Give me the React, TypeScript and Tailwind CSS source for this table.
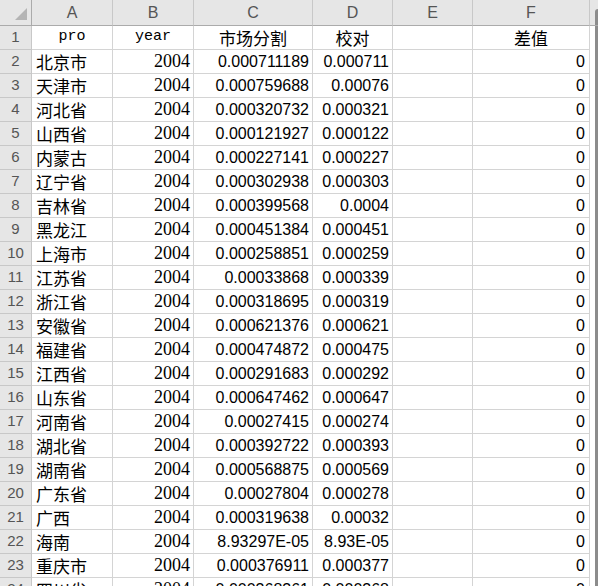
const rows: [string, string, string, string][] = [
  ["北京市", "0.000711189", "0.000711", "0"],
  ["天津市", "0.000759688", "0.00076", "0"],
  ["河北省", "0.000320732", "0.000321", "0"],
  ["山西省", "0.000121927", "0.000122", "0"],
  ["内蒙古", "0.000227141", "0.000227", "0"],
  ["辽宁省", "0.000302938", "0.000303", "0"],
  ["吉林省", "0.000399568", "0.0004", "0"],
  ["黑龙江", "0.000451384", "0.000451", "0"],
  ["上海市", "0.000258851", "0.000259", "0"],
  ["江苏省", "0.00033868", "0.000339", "0"],
  ["浙江省", "0.000318695", "0.000319", "0"],
  ["安徽省", "0.000621376", "0.000621", "0"],
  ["福建省", "0.000474872", "0.000475", "0"],
  ["江西省", "0.000291683", "0.000292", "0"],
  ["山东省", "0.000647462", "0.000647", "0"],
  ["河南省", "0.00027415", "0.000274", "0"],
  ["湖北省", "0.000392722", "0.000393", "0"],
  ["湖南省", "0.000568875", "0.000569", "0"],
  ["广东省", "0.00027804", "0.000278", "0"],
  ["广西", "0.000319638", "0.00032", "0"],
  ["海南", "8.93297E-05", "8.93E-05", "0"],
  ["重庆市", "0.000376911", "0.000377", "0"],
  ["四川省", "0.000368361", "0.000368", "0"],
];

const cols = "grid grid-cols-[32px_81px_81px_119px_80px_80px_117px]";
const cell = "h-[24px] border-r border-b border-[#d4d4d4] flex items-center overflow-hidden whitespace-nowrap";
const num = "font-['Liberation_Sans',sans-serif] text-[16px] text-black justify-end pr-[3px]";
const cjk = "font-['Noto_Sans_CJK_SC',sans-serif] text-[17px] text-black";
const serifNum = "[font-family:'Liberation_Serif',serif] text-[18px] text-black justify-end pr-[3px]";
const rowHead =
  "h-[24px] border-r border-b border-[#c8c8c8] bg-[#e6e6e6] flex items-center justify-center font-['Liberation_Sans',sans-serif] text-[15px] text-[#555]";

function HeaderRow() {
  const letters = ["A", "B", "C", "D", "E", "F"];
  return (
    <div className={cols}>
      <div className="h-[26px] bg-[#e6e6e6] border-r border-b border-[#ababab] relative">
        <div className="absolute right-[4px] bottom-[5px] w-0 h-0 border-l-[12px] border-l-transparent border-b-[12px] border-b-[#b4b4b4]" />
      </div>
      {letters.map((l) => (
        <div
          key={l}
          className="h-[26px] bg-[#e6e6e6] border-r border-b border-r-[#c8c8c8] border-b-[#ababab] flex items-center justify-center font-['Liberation_Sans',sans-serif] text-[16px] text-[#555]"
        >
          {l}
        </div>
      ))}
    </div>
  );
}

export default function App() {
  return (
    <div className="w-[598px] h-[586px] overflow-hidden bg-white flex">
      <div className="w-[590px] shrink-0">
        <HeaderRow />
        <div className={cols}>
          <div className={rowHead}>1</div>
          <div className={`${cell} justify-center font-['Liberation_Mono',monospace] text-[15px]`}>pro</div>
          <div className={`${cell} justify-center font-['Liberation_Mono',monospace] text-[15px]`}>year</div>
          <div className={`${cell} justify-center ${cjk}`}>市场分割</div>
          <div className={`${cell} justify-center ${cjk}`}>校对</div>
          <div className={cell} />
          <div className={`${cell} justify-center ${cjk}`}>差值</div>
        </div>
        {rows.map(([name, c, d, f], i) => (
          <div key={name} className={cols}>
            <div className={rowHead}>{i + 2}</div>
            <div className={`${cell} pl-[4px] ${cjk}`}>{name}</div>
            <div className={`${cell} ${serifNum}`}>2004</div>
            <div className={`${cell} ${num}`}>{c}</div>
            <div className={`${cell} ${num}`}>{d}</div>
            <div className={cell} />
            <div className={`${cell} ${num} pr-[4px]`}>{f}</div>
          </div>
        ))}
      </div>
      <div className="flex-1 flex flex-col">
        <div className="h-[26px] bg-[#e6e6e6] border-b border-[#ababab] flex justify-end">
          <div className="w-[3px] mt-[9px] bg-[#8c8c8c] rounded-tl-sm" />
        </div>
        <div className="flex-1 flex justify-end">
          <div className="w-[3px] bg-[#8c8c8c]" />
        </div>
      </div>
    </div>
  );
}
